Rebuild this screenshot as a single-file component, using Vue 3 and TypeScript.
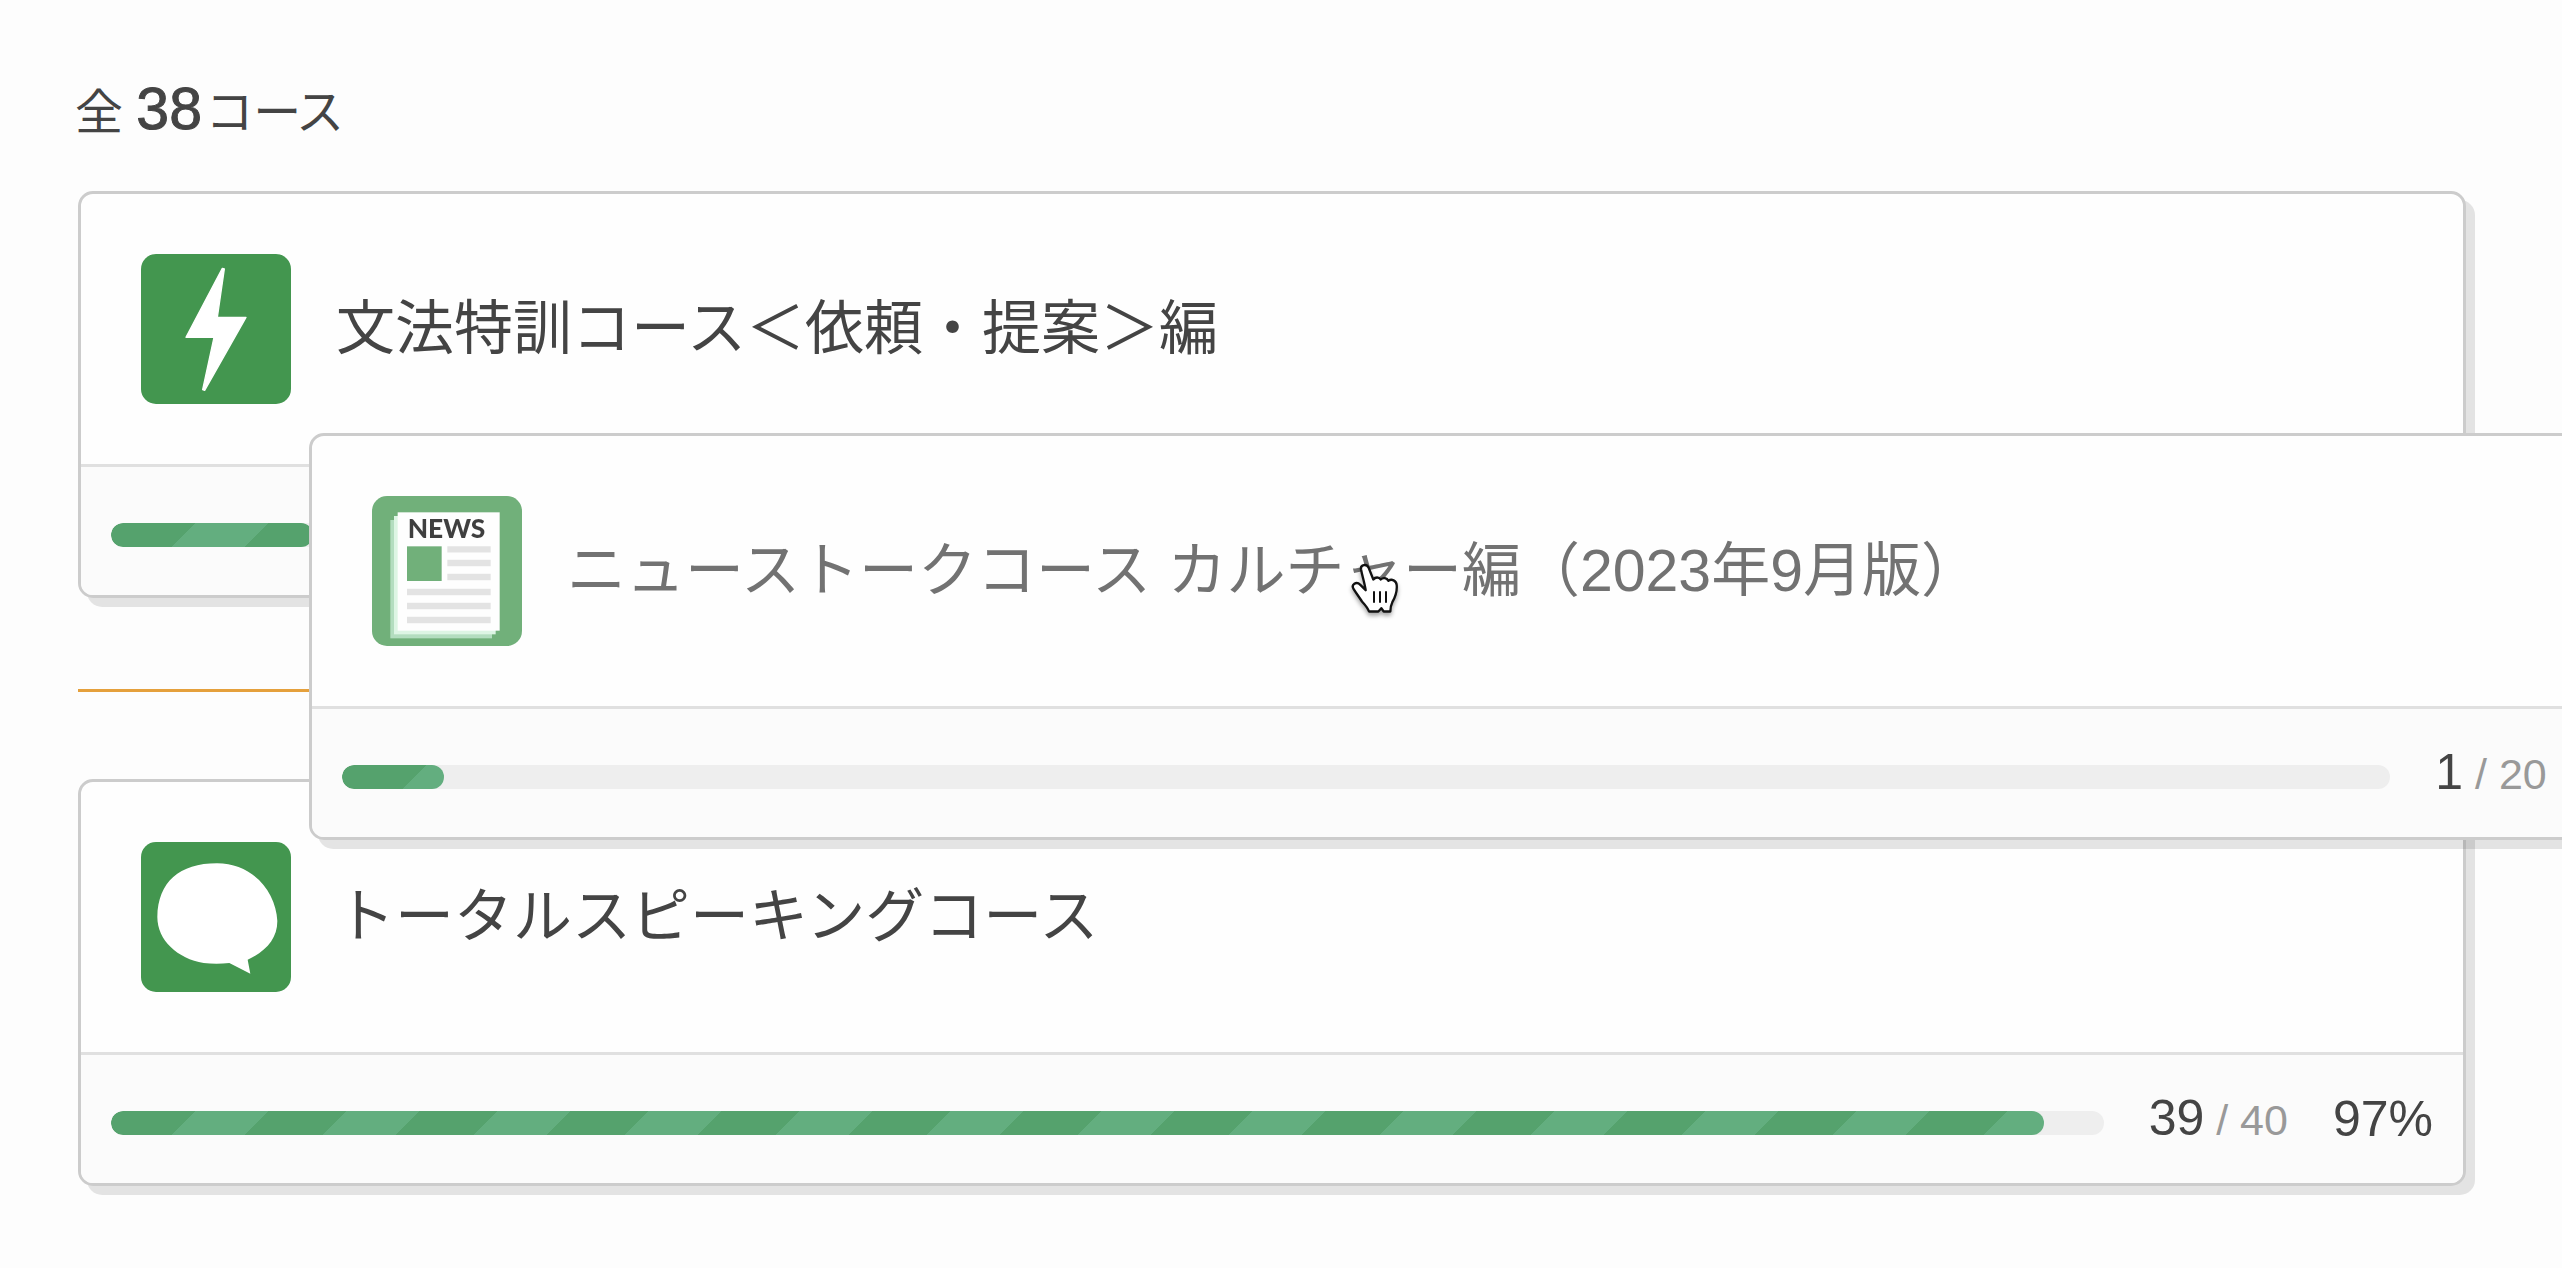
<script setup lang="ts">
type IconName = 'bolt' | 'news' | 'bubble'

interface Course {
  id: number
  title: string
  icon: IconName
  done: number
  total: number
  dragging?: boolean
}

const courseCount = 38

const courses: Course[] = [
  { id: 1, title: '文法特訓コース＜依頼・提案＞編', icon: 'bolt', done: 2, total: 20 },
  { id: 2, title: 'ニューストークコース カルチャー編（2023年9月版）', icon: 'news', done: 1, total: 20, dragging: true },
  { id: 3, title: 'トータルスピーキングコース', icon: 'bubble', done: 39, total: 40 },
]

const percent = (c: Course): number => Math.floor((c.done / c.total) * 100)
</script>

<template>
  <main class="page">
    <h1 class="summary">全 <span class="count">{{ courseCount }}</span><span class="unit">コース</span></h1>

    <ul class="courses">
      <template v-for="course in courses" :key="course.id">
        <li v-if="course.dragging" class="drop-line" aria-hidden="true"></li>
        <li class="card" :class="{ dragging: course.dragging }" draggable="true">
          <div class="head">
            <svg class="icon" viewBox="0 0 450 450" aria-hidden="true">
              <rect width="450" height="450" rx="45" fill="#43964f" />
              <path
                v-if="course.icon === 'bolt'"
                d="M244 43L250 45L229 190H315L191 409L185 407L219 250H135Z"
                fill="#fff" stroke="#fff" stroke-width="4" stroke-linejoin="round"
              />
              <path
                v-else-if="course.icon === 'bubble'"
                d="M228 64C335 64 405 148 409 237C409 290 375 328 320 353L328 395L265 363Q226 368 188 363C110 350 49 295 49 225C51 120 115 64 228 64Z"
                fill="#fff"
              />
              <g v-else>
                <rect x="55" y="72" width="305" height="355" fill="#9bd2aa" />
                <rect x="66" y="60" width="305" height="355" fill="#d3f2dc" />
                <rect x="77" y="49" width="306" height="355" fill="#fff" />
                <text x="107" y="127" class="news">NEWS</text>
                <rect x="105" y="151" width="104" height="104" fill="#43964f" />
                <path
                  d="M226 160H356M226 201H356M226 243H356M105 288H356M105 330H356M105 372H356"
                  stroke="#dbdbdb" stroke-width="19"
                />
              </g>
            </svg>
            <h2 class="title">{{ course.title }}</h2>
          </div>
          <div class="foot">
            <div
              class="track" role="progressbar" :aria-label="course.title"
              :aria-valuenow="percent(course)" aria-valuemin="0" aria-valuemax="100"
            >
              <div class="fill" :style="{ width: percent(course) + '%' }"></div>
            </div>
            <div class="steps">{{ course.done }}<span class="total"> / {{ course.total }}</span></div>
            <div class="percent">{{ percent(course) }}%</div>
          </div>
          <svg v-if="course.dragging" class="cursor" viewBox="90 100 150 170" aria-hidden="true">
            <path
              d="M123 121C121 107 140 104 146 117L160 152C166 144 177 144 182 152C189 145 201 147 205 156C215 149 229 155 230 168C232 186 226 204 217 220C212 230 211 238 211 248H191L184 238L175 248H147C143 236 135 228 126 218C119 207 109 194 101 181C92 167 109 156 121 168L137 184C134 163 127 143 123 121Z"
              fill="#fff" stroke="#111" stroke-width="7" stroke-linejoin="round"
            />
            <path d="M162 187V222M180 187V222M198 187V222" stroke="#111" stroke-width="6" />
          </svg>
        </li>
      </template>
    </ul>
  </main>
</template>

<style>
body {
  background: #fdfdfd;
}
</style>

<style scoped>
.page {
  box-sizing: border-box;
  min-height: 100vh;
  padding: 79px 96px 72px 78px;
  overflow: hidden;
  color: #444;
  font-family: "Liberation Sans", "Noto Sans CJK JP", sans-serif;
}

.summary {
  margin: 0 0 48px -3px;
  font-size: 48px;
  font-weight: 400;
  line-height: 60px;
}

.count {
  font-size: 59px;
  -webkit-text-stroke: 1px #444;
}

.unit {
  font-feature-settings: "palt";
  margin-left: 6px;
}

.courses {
  position: relative;
  margin: 0;
  padding: 0;
  list-style: none;
}

.card {
  border: 3px solid #ccc;
  border-radius: 15px;
  background: #fefefe;
  box-shadow: 9px 9px 0 rgba(0, 0, 0, 0.1);
}

.card.dragging {
  position: absolute;
  z-index: 1;
  top: 242px;
  left: 231px;
  box-sizing: border-box;
  width: 100%;
}

.drop-line {
  height: 3px;
  margin: 91px 0 87px;
  background: #e5a03c;
}

.head {
  display: flex;
  align-items: center;
  gap: 45px;
  padding: 60px;
}

.dragging .head {
  opacity: 0.75;
}

.icon {
  flex: none;
  width: 150px;
  height: 150px;
}

.news {
  font: 900 79px Lato, sans-serif;
  fill: #000;
}

.title {
  margin: 0;
  font-size: 59px;
  font-weight: 400;
  line-height: 90px;
  white-space: nowrap;
}

.foot {
  display: flex;
  align-items: center;
  gap: 45px;
  padding: 33px 30px;
  border-top: 3px solid #e0e0e0;
  border-radius: 0 0 12px 12px;
  background: #fbfbfb;
  font-size: 50px;
  line-height: 60px;
}

.track {
  flex: 1;
  height: 24px;
  margin-top: 8px;
  border-radius: 12px;
  background: #eee;
  overflow: hidden;
}

.fill {
  height: 100%;
  border-radius: 12px;
  background: linear-gradient(
    135deg,
    #63ae7f 2%, #55a26d 2%, #55a26d 28%,
    #63ae7f 28%, #63ae7f 52%,
    #55a26d 52%, #55a26d 78%, #63ae7f 78%
  ) 0 0 / 151px 151px;
}

.steps {
  white-space: pre;
}

.total {
  color: #999;
  font-size: 43px;
}

.cursor {
  position: absolute;
  top: 126px;
  left: 1038px;
  width: 50px;
  height: 57px;
  overflow: visible;
  filter: drop-shadow(0 3px 2px rgba(0, 0, 0, 0.35));
}
</style>
